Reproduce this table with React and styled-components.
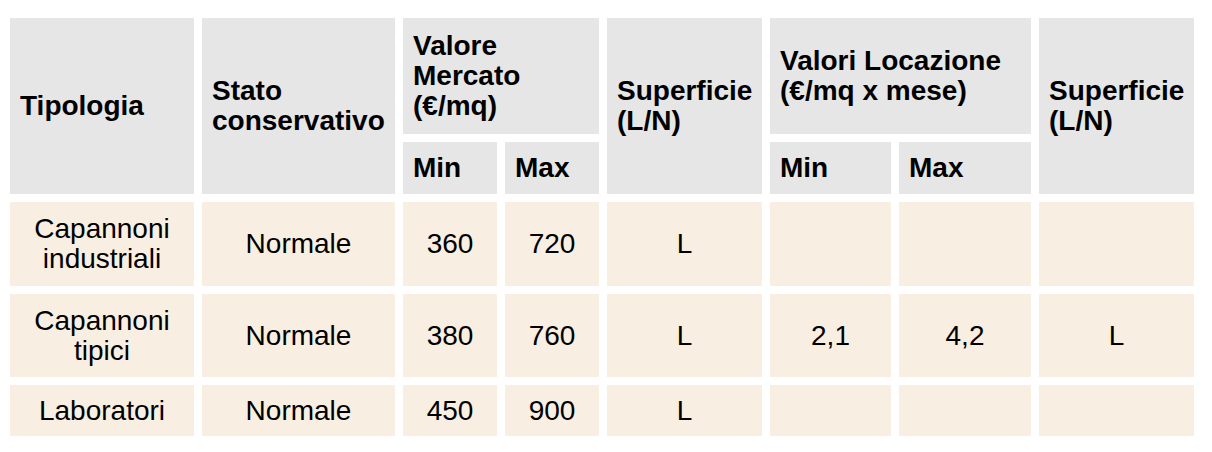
import React from 'react'
import styled, { createGlobalStyle } from 'styled-components'

const GlobalStyle = createGlobalStyle`
    body {
        margin: 0;
        background: #ffffff;
        font-family: "Liberation Sans", Arial, Helvetica, sans-serif;
    }
`

const Table = styled.table`
    table-layout: fixed;
    width: 1200px;
    margin: 10px 0 0 2px;
    border-collapse: separate;
    border-spacing: 8px;
    font-size: 28px;
    color: #000;
`

const HeadCell = styled.th`
    box-sizing: border-box;
    height: ${p => p.$h}px;
    padding: 0 2px 0 10px;
    background: #e6e6e6;
    font-weight: 700;
    text-align: left;
    vertical-align: middle;
    line-height: 30px;
    white-space: nowrap;
`

const Cell = styled.td`
    box-sizing: border-box;
    height: ${p => p.$h}px;
    padding: 0 4px;
    background: #f8eee2;
    font-weight: 400;
    text-align: center;
    vertical-align: middle;
    line-height: 30px;
`

const widths = [184, 193, 94, 94, 155, 121, 132, 155]

const rows = [
    { h: 84, tipo: ['Capannoni', 'industriali'], vals: ['360', '720', 'L', '', '', ''] },
    { h: 83, tipo: ['Capannoni', 'tipici'], vals: ['380', '760', 'L', '2,1', '4,2', 'L'] },
    { h: 51, tipo: ['Laboratori'], vals: ['450', '900', 'L', '', '', ''] },
]

export default function App() {
    return (
        <>
            <GlobalStyle />
            <Table>
                <colgroup>
                    {widths.map((w, i) => <col key={i} style={{ width: w }} />)}
                </colgroup>
                <thead>
                    <tr>
                        <HeadCell rowSpan={2} $h={176}>Tipologia</HeadCell>
                        <HeadCell rowSpan={2} $h={176}>Stato<br />conservativo</HeadCell>
                        <HeadCell colSpan={2} $h={116}>Valore<br />Mercato<br />(€/mq)</HeadCell>
                        <HeadCell rowSpan={2} $h={176}>Superficie<br />(L/N)</HeadCell>
                        <HeadCell colSpan={2} $h={116}>Valori Locazione<br />(€/mq x mese)</HeadCell>
                        <HeadCell rowSpan={2} $h={176}>Superficie<br />(L/N)</HeadCell>
                    </tr>
                    <tr>
                        <HeadCell $h={52}>Min</HeadCell>
                        <HeadCell $h={52}>Max</HeadCell>
                        <HeadCell $h={52}>Min</HeadCell>
                        <HeadCell $h={52}>Max</HeadCell>
                    </tr>
                </thead>
                <tbody>
                    {rows.map((r, i) => (
                        <tr key={i}>
                            <Cell $h={r.h}>
                                {r.tipo.map((t, j) => (
                                    <React.Fragment key={j}>{j > 0 && <br />}{t}</React.Fragment>
                                ))}
                            </Cell>
                            <Cell $h={r.h}>Normale</Cell>
                            {r.vals.map((v, j) => <Cell key={j} $h={r.h}>{v}</Cell>)}
                        </tr>
                    ))}
                </tbody>
            </Table>
        </>
    )
}
